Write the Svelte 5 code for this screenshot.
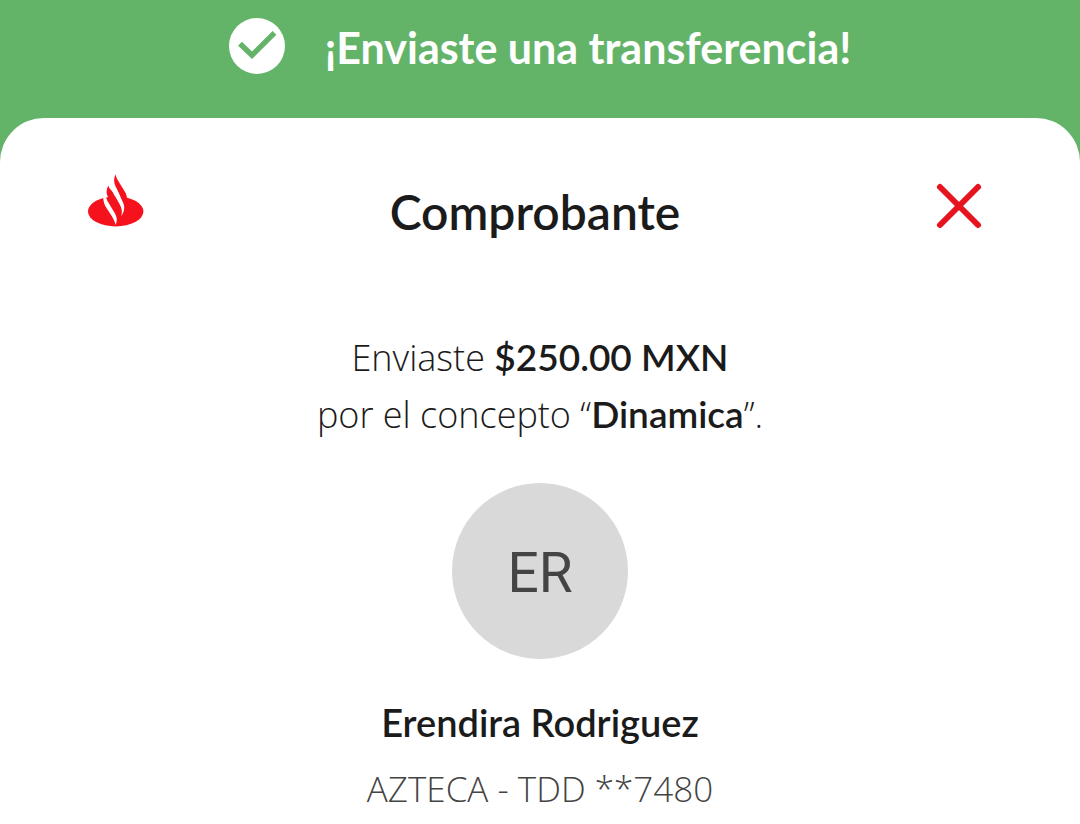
<script lang="ts">
	let visible = $state(true);

	const transfer = {
		amount: '$250.00 MXN',
		concept: 'Dinamica',
		recipient: 'Erendira Rodriguez',
		initials: 'ER',
		account: 'AZTECA - TDD **7480'
	};
</script>

<div class="screen">
	<div class="banner" role="status">
		<svg class="banner__icon" viewBox="0 0 56 56" aria-hidden="true">
			<circle cx="28" cy="28" r="28" fill="#fff" />
			<path d="M11 25.7 23 37.3 45.5 14.8" fill="none" stroke="#63b469" stroke-width="5.4" />
		</svg>
		<p class="banner__text">¡Enviaste una transferencia!</p>
	</div>

	{#if visible}
		<main class="sheet">
			<header class="sheet__header">
				<svg class="logo" viewBox="0 0 56 54" role="img" aria-label="Santander">
					<g fill="#f5121d">
						<ellipse cx="27.7" cy="37.4" rx="27.7" ry="15" />
						<path d="M20.3 11.5C18 16 18 20 20.5 24L30 42 36 38 25 18.5C22.500 15 20.800 14 20.300 11.500Z" />
						<path d="M27.700 .3C25.500 4 25.600 8.500 27.800 13L34.400 27 39 26C39 22 38.500 20.500 37 18L31.200 8.500C29.300 5.500 28 3.500 27.700 .3Z" />
					</g>
					<g fill="#fff">
						<path d="M15 20C15.200 28 16.500 31 18.500 34L24 42.500C26 46 27.300 48.500 27.500 51 29.500 47 29 43 27 39.500L19.800 27.500C18.600 25.500 18.200 23.500 18 20Z" />
						<path d="M25 18.500 31.500 30C34 34.500 34.500 38 33.200 42 36.500 38 37.200 32.500 34.800 27.900L27.800 13Z" />
					</g>
				</svg>
				<h1 class="title">Comprobante</h1>
				<button class="close" type="button" aria-label="Cerrar" onclick={() => (visible = false)}>
					<svg viewBox="0 0 48 48" aria-hidden="true">
						<path d="M5 5 43 43M43 5 5 43" stroke="#e6141f" stroke-width="6" stroke-linecap="round" />
					</svg>
				</button>
			</header>

			<p class="summary">
				Enviaste <strong>{transfer.amount}</strong><br />
				por el concepto “<strong>{transfer.concept}</strong>”.
			</p>

			<div class="avatar" aria-hidden="true">{transfer.initials}</div>
			<h2 class="name">{transfer.recipient}</h2>
			<p class="account">{transfer.account}</p>
		</main>
	{/if}
</div>

<style>
	:global(body) {
		margin: 0;
		background: #fff;
	}

	.screen {
		background: #63b469;
		font-family: Lato, 'Noto Sans', sans-serif;
		color: #1b1b1b;
	}

	.banner {
		display: flex;
		align-items: center;
		justify-content: center;
		gap: 40px;
		height: 92px;
		padding-bottom: 26px;
	}

	.banner__icon {
		width: 56px;
		height: 56px;
	}

	.banner__text {
		margin: 4px 0 0;
		color: #fff;
		font-size: 43px;
		font-weight: 700;
		line-height: 56px;
	}

	.sheet {
		display: flex;
		flex-direction: column;
		align-items: center;
		padding: 56px 88px 12px;
		border-radius: 44px 44px 0 0;
		background: #fff;
	}

	.sheet__header {
		display: flex;
		align-items: flex-start;
		justify-content: space-between;
		align-self: stretch;
	}

	.logo {
		width: 56px;
		height: 54px;
	}

	.title {
		margin: 6px 0 0;
		font-size: 48px;
		font-weight: 600;
		line-height: 64px;
	}

	.close {
		width: 66px;
		height: 64px;
		padding: 0;
		border: 0;
		background: none;
		cursor: pointer;
	}

	.close svg {
		display: block;
		width: 48px;
		height: 48px;
		margin: 0 auto;
	}

	.summary {
		margin: 85px 0 40px;
		font-family: 'Open Sans', 'Noto Sans', sans-serif;
		font-size: 36px;
		font-weight: 300;
		line-height: 56px;
		text-align: center;
	}

	.summary strong {
		font-family: Lato, sans-serif;
		font-size: 37px;
		font-weight: 600;
	}

	.avatar {
		display: grid;
		place-items: center;
		box-sizing: border-box;
		width: 176px;
		height: 176px;
		padding-top: 4px;
		border-radius: 50%;
		background: #d9d9d9;
		color: #444;
		font-family: Roboto, sans-serif;
		font-size: 55px;
	}

	.name {
		margin: 35px 0 0;
		font-size: 38px;
		font-weight: 600;
		line-height: 56px;
	}

	.account {
		margin: 11px 0 0;
		color: #444;
		font-family: 'Open Sans', 'Noto Sans', sans-serif;
		font-size: 35px;
		font-weight: 300;
		line-height: 56px;
	}
</style>
